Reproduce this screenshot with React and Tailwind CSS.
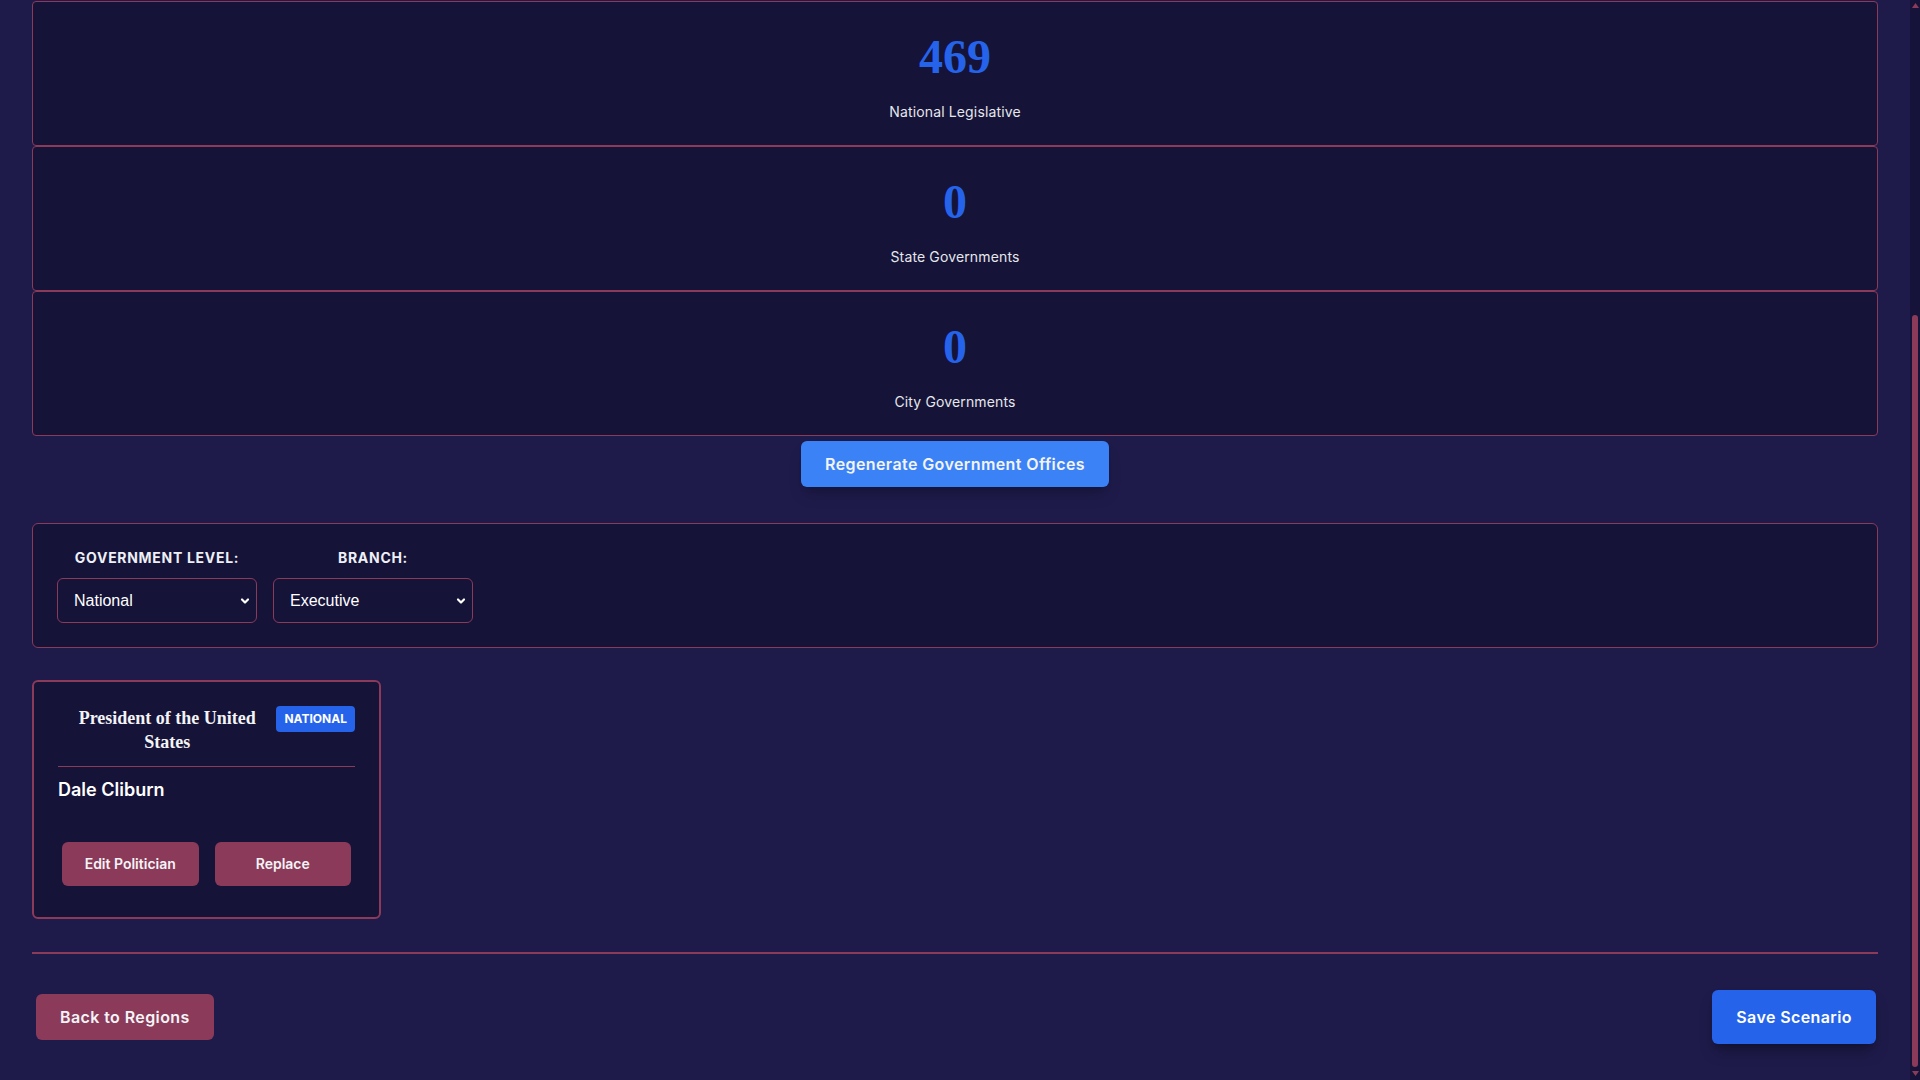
import React from "react";

const stats = [
  { value: 469, label: "National Legislative" },
  { value: 0, label: "State Governments" },
  { value: 0, label: "City Governments" },
];

function StatCard({ value, label }) {
  return (
    <div className="rounded border border-[#8b3a5a] bg-[#151338] pb-[23px] pt-[26px] text-center">
      <div className="mb-4 font-['Liberation_Serif',serif] text-[48px] font-bold leading-[58px] text-[#2563eb]">
        {value}
      </div>
      <div className="text-sm leading-5 tracking-[0.01em] text-[#e5e7eb]">{label}</div>
    </div>
  );
}

function Chevron() {
  return (
    <svg
      className="pointer-events-none absolute right-[6px] top-1/2 h-3 w-3 -translate-y-1/2 text-white"
      viewBox="0 0 12 12"
      fill="none"
      stroke="currentColor"
      strokeWidth="2.2"
      strokeLinecap="round"
      strokeLinejoin="round"
    >
      <path d="M3 4.5 6 7.5 9 4.5" />
    </svg>
  );
}

function Filter({ label, value, options }) {
  return (
    <div className="flex w-[200px] flex-col">
      <label className="mb-[10px] text-center text-sm font-bold uppercase leading-5 tracking-wider text-[#eef0f6]">
        {label}
      </label>
      <div className="relative">
        <select
          defaultValue={value}
          className="h-[45px] w-full appearance-none rounded-md border border-[#8b3a5a] bg-[#151338] pl-4 font-['Liberation_Sans',Arial,sans-serif] text-base text-white outline-none"
        >
          {options.map((o) => (
            <option key={o}>{o}</option>
          ))}
        </select>
        <Chevron />
      </div>
    </div>
  );
}

function OfficeCard() {
  return (
    <div className="w-[349px] rounded-md border-2 border-[#8b3a5a] bg-[#151338] px-6 pb-[31px] pt-6">
      <div className="flex items-start border-b border-[#8b3a5a] pb-3">
        <h3 className="flex-1 text-center font-['Liberation_Serif',serif] text-[18px] font-bold leading-6 text-[#f3f4f6]">
          President of the United States
        </h3>
        <span className="shrink-0 rounded bg-[#2563eb] px-2 py-[5px] text-xs font-bold leading-4 text-white">
          NATIONAL
        </span>
      </div>
      <div className="mt-[9px] text-lg font-semibold leading-7 text-white">Dale Cliburn</div>
      <div className="mt-[38px] flex gap-4 px-1">
        <button className="flex-1 rounded-md bg-[#8b3a5a] py-3 text-sm font-semibold leading-5 text-[#f3f4f6]">
          Edit Politician
        </button>
        <button className="flex-1 rounded-md bg-[#8b3a5a] py-3 text-sm font-semibold leading-5 text-[#f3f4f6]">
          Replace
        </button>
      </div>
    </div>
  );
}

function ScrollBar() {
  return (
    <div className="flex w-[10px] shrink-0 flex-col items-center bg-[#15133a]">
      <svg className="mt-[3px] h-[5px] w-[7px]" viewBox="0 0 7 5">
        <path d="M3.5 0 7 5H0z" fill="#8b3a5a" />
      </svg>
      <div className="mt-[307px] h-[752px] w-[6px] rounded-full bg-[#8b3a5a]" />
      <svg className="mt-[4px] h-[5px] w-[7px]" viewBox="0 0 7 5">
        <path d="M0 0h7L3.5 5z" fill="#8b3a5a" />
      </svg>
    </div>
  );
}

export default function App() {
  return (
    <div className="flex h-screen overflow-hidden bg-[#1e1b4b] font-['Inter',sans-serif] text-[#e5e7eb]">
      <main className="min-w-0 flex-1 px-8 pb-9 pt-px">
        <div className="flex flex-col">
          {stats.map((s) => (
            <StatCard key={s.label} value={s.value} label={s.label} />
          ))}
        </div>

        <div className="mt-[5px] flex justify-center">
          <button className="rounded-md bg-[#3b82f6] px-6 py-[11px] text-base font-semibold leading-6 tracking-wide text-[#f3f4f6] shadow-lg shadow-black/20">
            Regenerate Government Offices
          </button>
        </div>

        <div className="mt-9 rounded-md border border-[#8b3a5a] bg-[#151338] p-6">
          <div className="flex gap-4">
            <Filter label="Government Level:" value="National" options={["National", "State", "City"]} />
            <Filter label="Branch:" value="Executive" options={["Executive", "Legislative", "Judicial"]} />
          </div>
        </div>

        <div className="mt-8 flex">
          <OfficeCard />
        </div>

        <div className="mt-[33px] flex items-center justify-between border-t-2 border-[#8b3a5a] pt-9">
          <button className="ml-1 rounded-md bg-[#8b3a5a] px-6 py-[11px] text-base font-semibold leading-6 tracking-wide text-[#f3f4f6]">
            Back to Regions
          </button>
          <button className="mr-0.5 rounded-md bg-[#2563eb] px-6 py-[15px] text-base font-semibold leading-6 tracking-wide text-white shadow-lg shadow-black/30">
            Save Scenario
          </button>
        </div>
      </main>
      <ScrollBar />
    </div>
  );
}
